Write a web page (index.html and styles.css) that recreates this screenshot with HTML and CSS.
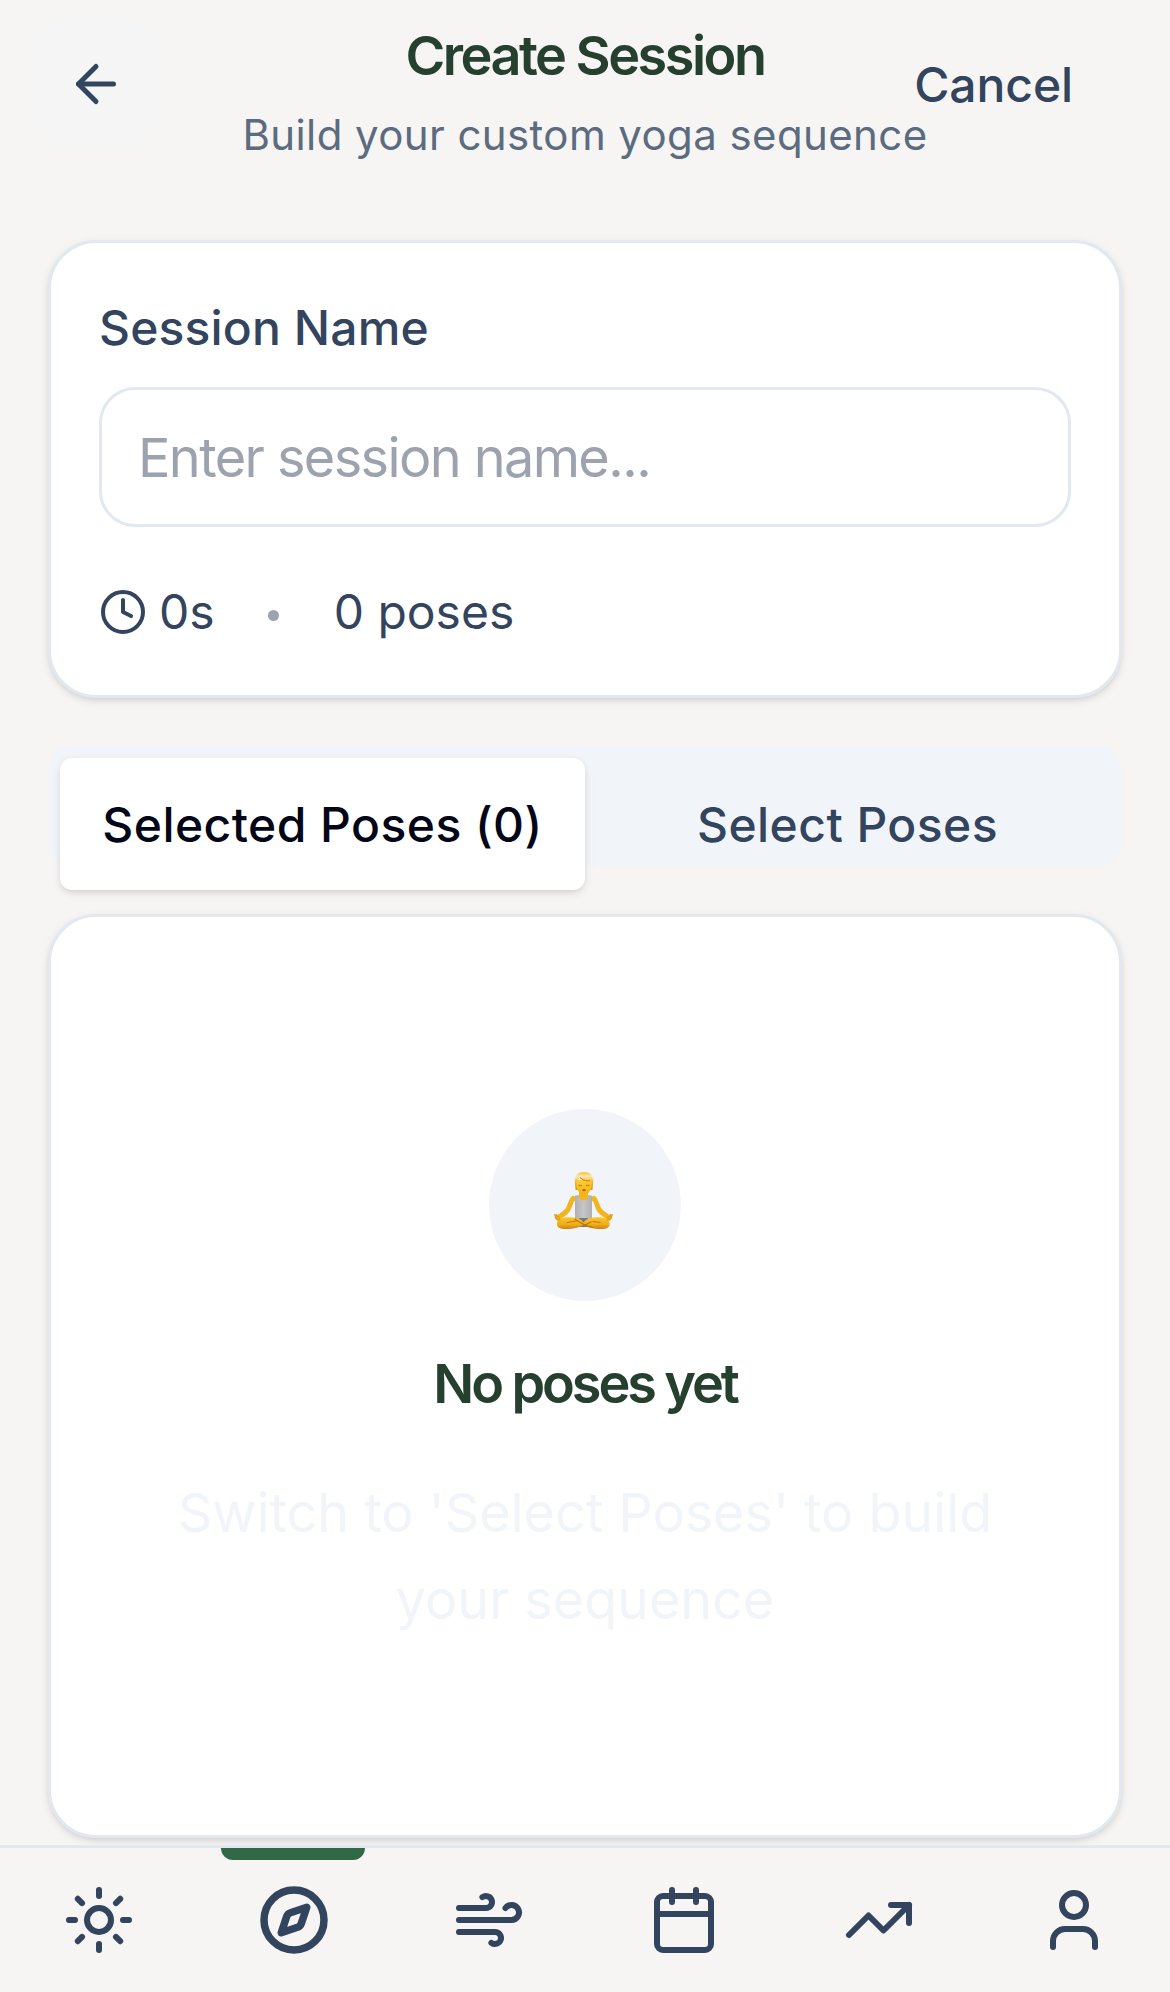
FILE: index.html
```html
<!DOCTYPE html>
<html lang="en">
<head>
<meta charset="utf-8">
<title>Create Session</title>
<link rel="stylesheet" href="styles.css">
</head>
<body>
<div class="app">
  <header class="header">
    <div class="header-actions">
      <button class="back" aria-label="Back">
        <svg class="icon icon-back" viewBox="0 0 24 24"><path d="m12 19-7-7 7-7"/><path d="M19 12H5"/></svg>
      </button>
      <button class="cancel">Cancel</button>
    </div>
    <div class="heading">
      <h1 class="title">Create Session</h1>
      <p class="subtitle">Build your custom yoga sequence</p>
    </div>
  </header>

  <main class="content">
    <section class="card details">
      <label class="label" for="name">Session Name</label>
      <input class="input" id="name" type="text" placeholder="Enter session name...">
      <div class="stats">
        <svg class="icon icon-clock" viewBox="0 0 24 24"><circle cx="12" cy="12" r="10"/><path d="M12 6v6l4 2"/></svg>
        <span class="duration">0s</span>
        <span class="dot"></span>
        <span class="count">0 poses</span>
      </div>
    </section>

    <div class="tabs">
      <button class="tab tab-active">Selected Poses (0)</button>
      <button class="tab">Select Poses</button>
    </div>

    <section class="card empty">
      <div class="avatar">
        <svg class="yogi" viewBox="0 0 60 58">
          <defs>
            <linearGradient id="skin" x1="0" y1="0" x2="0" y2="1"><stop offset="0" stop-color="#ffcf2b"/><stop offset="1" stop-color="#f2b01a"/></linearGradient>
            <linearGradient id="legs" x1="0" y1="0" x2="0" y2="1"><stop offset="0" stop-color="#fcc424"/><stop offset=".6" stop-color="#f0ad1c"/><stop offset="1" stop-color="#c98212"/></linearGradient>
            <linearGradient id="shirt" x1="0" y1="0" x2="1" y2="0"><stop offset="0" stop-color="#b0b0b3"/><stop offset=".5" stop-color="#c6c6c8"/><stop offset="1" stop-color="#b0b0b3"/></linearGradient>
            <linearGradient id="hair" x1="0" y1="0" x2="0" y2="1"><stop offset="0" stop-color="#f3bb2e"/><stop offset=".35" stop-color="#ffe9a8"/><stop offset="1" stop-color="#e6a620"/></linearGradient>
          </defs>
          <path d="M20 26.500C17.500 29 17 34 15 37.500 12.500 41 9 43 5.500 45.500M41 26.500C43.500 29 44 34 46 37.500 48.500 41 52 43 55.500 45.500" fill="none" stroke="#f3b51e" stroke-width="5" stroke-linecap="round"/>
          <path d="M26 18h9v5l6 2v4H20v-4l6-2z" fill="#f5b61b"/>
          <path d="M22 23.500h3.500c1 6.500 9 6.500 10 0H39V47H22z" fill="url(#shirt)"/>
          <path d="M26 46h9v9h-9z" fill="#737684"/>
          <path d="M23 46c-8-1.500-18-.5-19 5-.8 4 3 6 9 6 8 0 14-2 17.500-4 3.500 2 9.500 4 17.500 4 6 0 9.500-2 8.500-6-1-5.500-11-6.500-19-5-4 .5-6 3-7 4.500-1-1.500-3-4-7.500-4.500z" fill="url(#legs)"/>
          <path d="M22 47c5 4 11 7 18 8.500M38 50l-8 4M14 50.500l9-1.500M47 50.500l-7-1" fill="none" stroke="#bb780e" stroke-width="1.200" stroke-linecap="round"/>
          <path d="M6.500 47.500c-3 1-5-3-3-4.500M6 45l-4-2M54.500 47.500c3 1 5-3 3-4.500M55 45l4-2" fill="none" stroke="#e3a01b" stroke-width="1.900" stroke-linecap="round"/>
          <path d="M22 9h18l-.5 9h-17z" fill="#dc9c1a"/>
          <path d="M23 8c0 10 3 14.500 8 14.500S39 18 39 8z" fill="url(#skin)"/>
          <path d="M22 12C21 4 24 0 31 0s10 4 9 12c-.5-2-1.500-3-3-3.500-4 1-7.500-.5-10-3C25 7 24 9 22 12z" fill="url(#hair)"/>
          <path d="M27 5.500c2.500 2.500 6 4 10 3" fill="none" stroke="#bd7b15" stroke-width="1"/>
          <path d="M25.500 13q1.800 1.200 3.500.3M33 13.300q1.800.8 3.500-.3" fill="none" stroke="#a86d10" stroke-width=".9"/>
          <path d="M28.800 18q2.200-1.600 4.400 0-2.200 2.200-4.400 0z" fill="#a54a18"/>
        </svg>
      </div>
      <h2 class="empty-title">No poses yet</h2>
      <p class="empty-text">Switch to 'Select Poses' to build your sequence</p>
    </section>
  </main>

  <nav class="nav">
    <a class="nav-item"><svg class="icon" viewBox="0 0 24 24"><circle cx="12" cy="12" r="4"/><path d="M12 2v2M12 20v2M4.930 4.930l1.410 1.410M17.660 17.660l1.410 1.410M2 12h2M20 12h2M6.340 17.660l-1.410 1.410M19.070 4.930l-1.410 1.410"/></svg></a>
    <a class="nav-item nav-active"><svg class="icon" viewBox="0 0 24 24"><path d="m16.240 7.760-1.804 5.411a2 2 0 0 1-1.265 1.265L7.760 16.240l1.804-5.411a2 2 0 0 1 1.265-1.265z"/><circle cx="12" cy="12" r="10"/></svg></a>
    <a class="nav-item"><svg class="icon" viewBox="0 0 24 24"><path d="M12.800 19.600A2 2 0 1 0 14 16H2"/><path d="M17.500 8a2.500 2.500 0 1 1 2 4H2"/><path d="M9.800 4.400A2 2 0 1 1 11 8H2"/></svg></a>
    <a class="nav-item"><svg class="icon" viewBox="0 0 24 24"><path d="M8 2v4M16 2v4"/><rect width="18" height="18" x="3" y="4" rx="2"/><path d="M3 10h18"/></svg></a>
    <a class="nav-item"><svg class="icon" viewBox="0 0 24 24"><path d="M22 7 13.500 15.500 8.500 10.500 2 17"/><path d="M16 7h6v6"/></svg></a>
    <a class="nav-item"><svg class="icon" viewBox="0 0 24 24"><path d="M19 21v-2a4 4 0 0 0-4-4H9a4 4 0 0 0-4 4v2"/><circle cx="12" cy="7" r="4"/></svg></a>
  </nav>
</div>
</body>
</html>
```

FILE: styles.css
```css
* { box-sizing: border-box; }
body {
  margin: 0;
  background: #f6f5f3;
  color: #33445f;
  font-family: Inter, "Liberation Sans", sans-serif;
  font-weight: 440;
  -webkit-font-smoothing: antialiased;
}
button, input { font: inherit; color: inherit; border: 0; background: none; padding: 0; }
h1, h2, p { margin: 0; }
.app { height: 1992px; display: flex; flex-direction: column; overflow: hidden; }
.icon {
  display: block;
  width: 72px;
  height: 72px;
  fill: none;
  stroke: #33445f;
  stroke-width: 2;
  stroke-linecap: round;
  stroke-linejoin: round;
}

.header { display: grid; height: 240px; flex: none; }
.header-actions, .heading { grid-area: 1 / 1; }
.header-actions { display: flex; justify-content: space-between; align-items: flex-start; padding: 18px 97px 0 30px; }
.back { display: grid; place-items: center; width: 132px; height: 132px; border-radius: 36px; background: #f5f5f5; }
.icon-back { width: 60px; height: 60px; }
.cancel { height: 132px; font-size: 48px; font-weight: 550; letter-spacing: -0.1px; }
.heading { padding-top: 23px; text-align: center; justify-self: center; }
.title { font-size: 54px; font-weight: 620; line-height: 66px; letter-spacing: -2.5px; color: #26402f; }
.subtitle { margin-top: 16px; font-size: 42px; line-height: 60px; letter-spacing: 0.4px; color: #5b6b80; }

.content { flex: none; padding: 0 48px; }
.card {
  border: 3px solid #e2e8f0;
  border-radius: 48px;
  background: #fff;
  box-shadow: 0 3px 9px rgba(0, 0, 0, 0.1), 0 3px 6px -3px rgba(0, 0, 0, 0.1);
}
.details { height: 458px; padding: 48px; }
.label { display: block; height: 96px; font-size: 48px; font-weight: 550; line-height: 74px; letter-spacing: 0.15px; }
.input {
  display: block;
  width: 100%;
  height: 140px;
  padding: 0 36px;
  border: 3px solid #e2e8f0;
  border-radius: 36px;
  font-size: 54px;
  letter-spacing: -1.6px;
}
.input::placeholder { color: #9ca3af; opacity: 1; }
.stats { display: flex; align-items: center; margin-top: 49px; height: 72px; font-size: 48px; line-height: 72px; letter-spacing: 0; }
.icon-clock { width: 48px; height: 48px; }
.duration { margin-left: 12px; }
.dot { width: 11px; height: 11px; margin: 6px 55px 0 53px; border-radius: 50%; background: #9ca3af; }

.tabs { display: grid; grid-template-columns: 525px 525px; height: 120px; margin-top: 48px; padding: 12px; border-radius: 24px; background: #f1f5f9; }
.tab { height: 132px; border-radius: 12px; font-size: 48px; font-weight: 550; letter-spacing: 0.45px; }
.tab-active { background: #fff; color: #020617; box-shadow: 0 3px 9px rgba(0, 0, 0, 0.1), 0 3px 6px -3px rgba(0, 0, 0, 0.1); }

.empty { display: flex; flex-direction: column; align-items: center; height: 924px; margin-top: 48px; padding-top: 192px; text-align: center; }
.avatar { display: flex; flex: none; width: 192px; height: 192px; padding: 63px 64px; border-radius: 50%; background: #f1f5f9; }
.yogi { width: 60px; height: 58px; }
.empty-title { margin-top: 50px; font-size: 54px; font-weight: 620; line-height: 66px; letter-spacing: -3.1px; color: #26402f; }
.empty-text { width: 880px; margin-top: 52px; font-size: 54px; line-height: 87px; letter-spacing: -0.1px; color: #f1f5f9; }

.nav { display: flex; flex: none; height: 147px; margin-top: 7px; border-top: 3px solid #e2e8f0; background: #f6f5f3; position: relative; }
.nav-item { position: relative; width: 195px; padding: 36px 0 0 63px; }
.nav-active .icon { stroke-width: 2.5; }
.nav-active::before {
  content: "";
  position: absolute;
  top: 0;
  left: 26px;
  width: 144px;
  height: 12px;
  border-radius: 0 0 12px 12px;
  background: #316845;
}
```
